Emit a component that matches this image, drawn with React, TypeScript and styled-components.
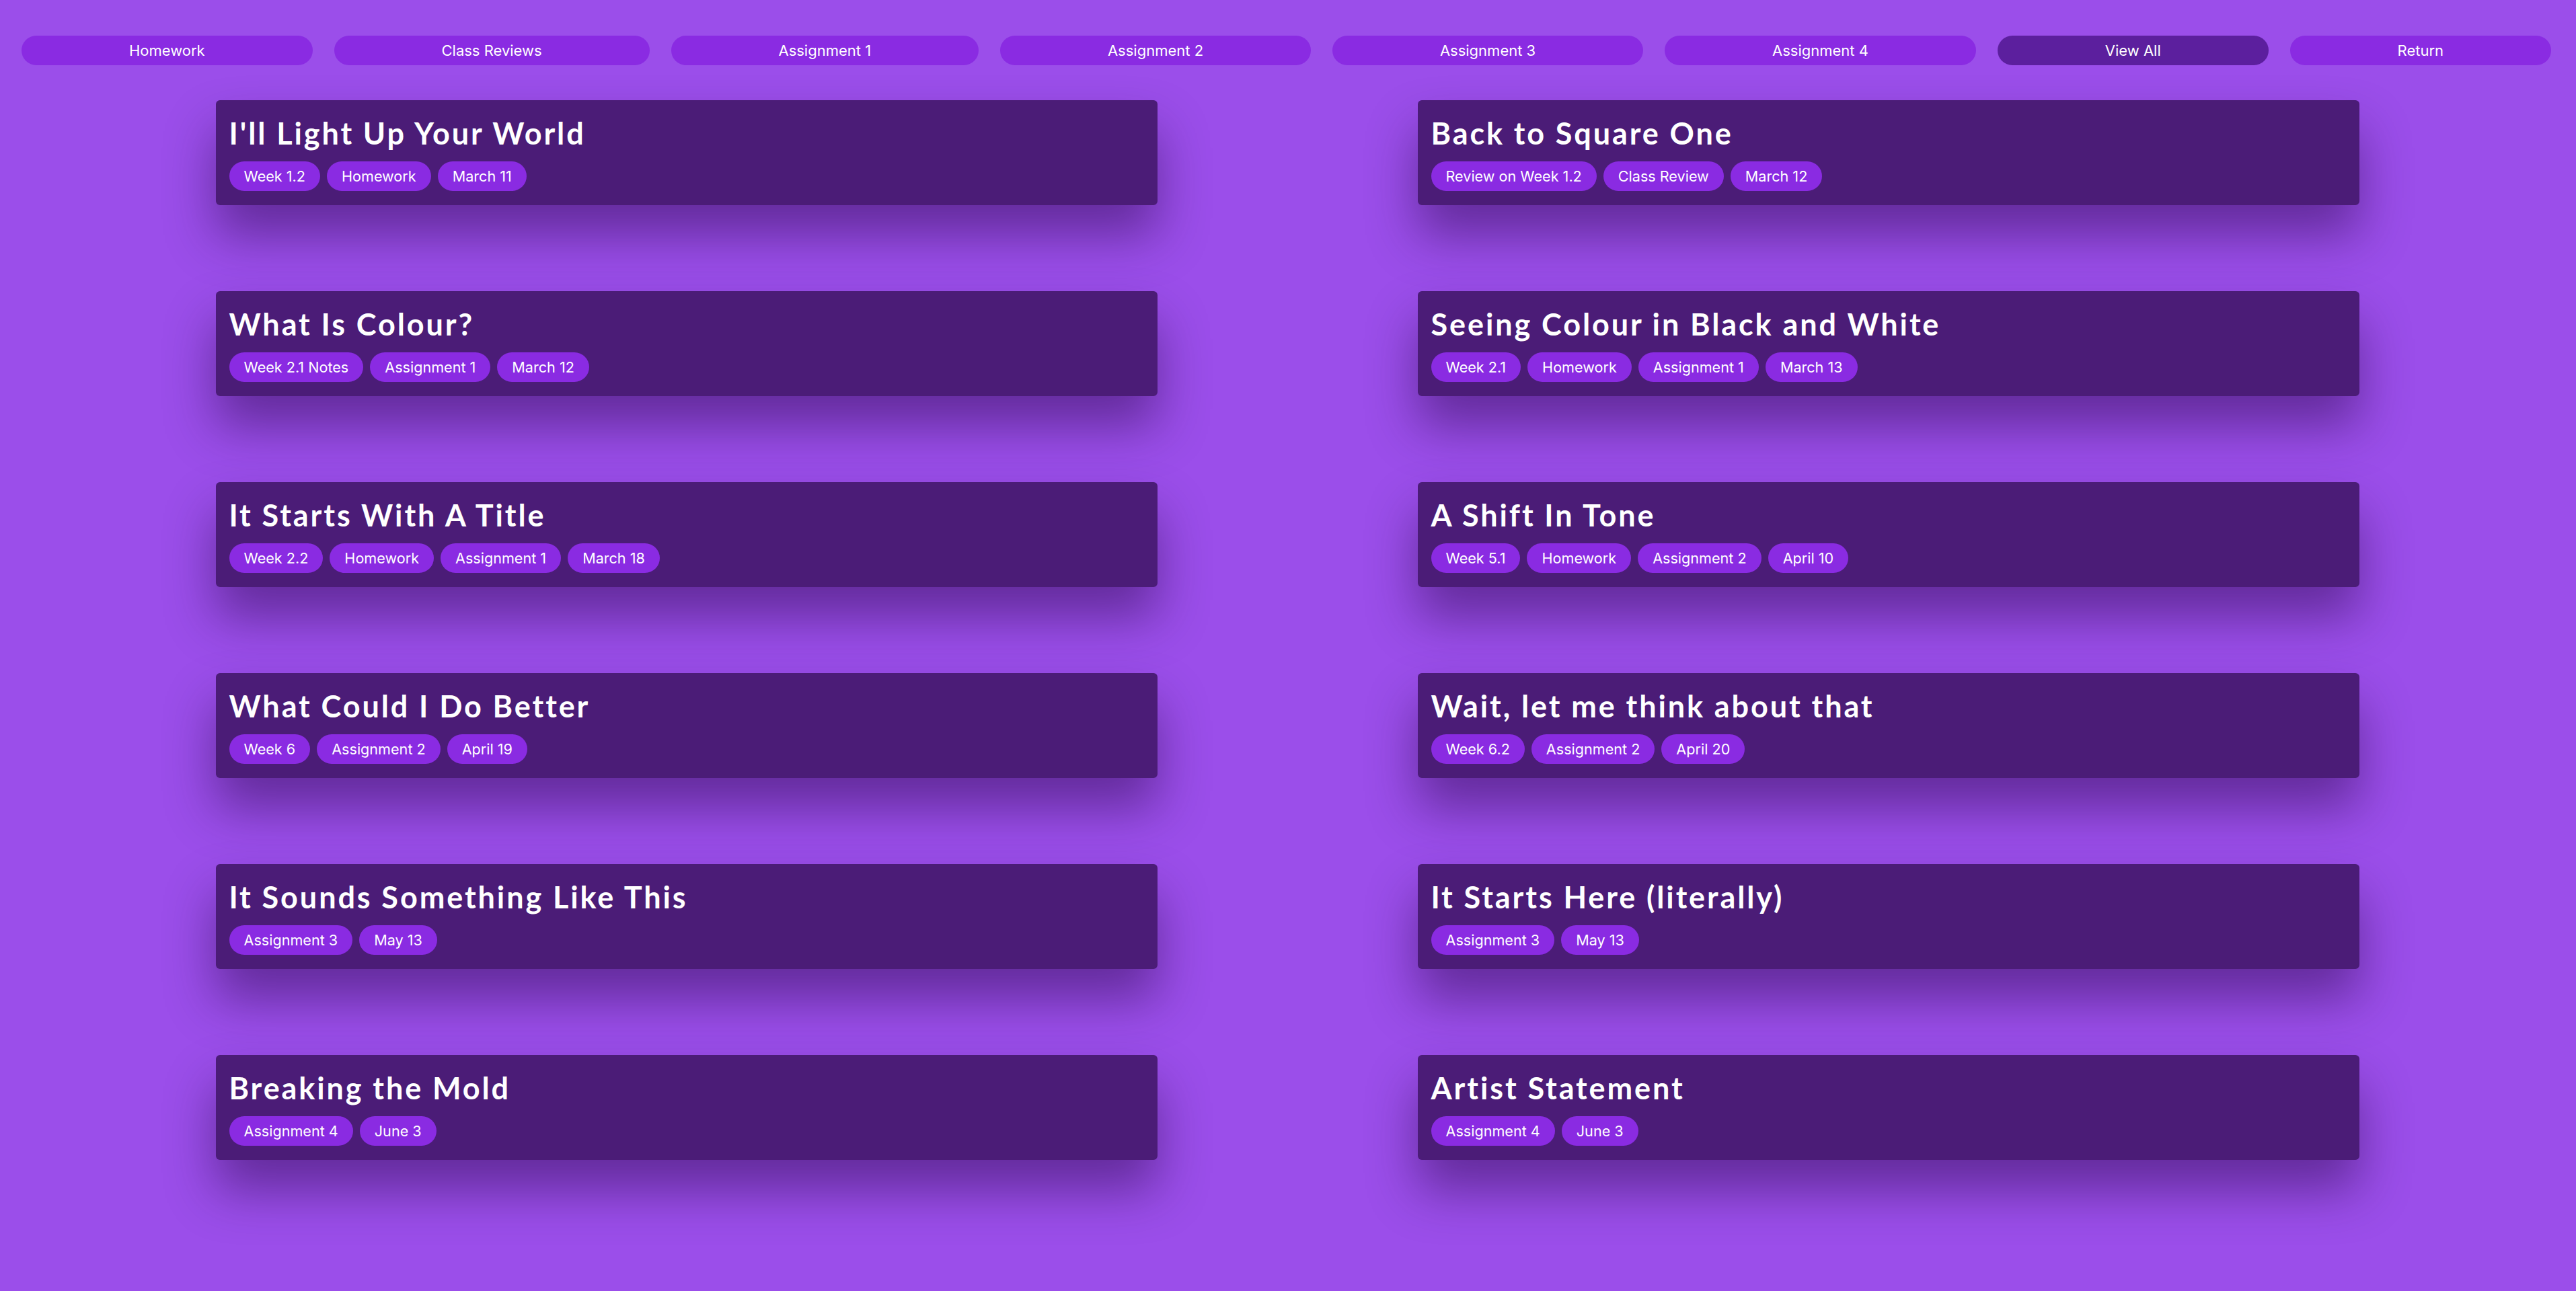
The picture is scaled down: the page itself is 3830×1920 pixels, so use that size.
import React from "react";
import styled, { createGlobalStyle } from "styled-components";

const bg = "#9b4eea";
const violet = "#8a2be2";
const deep = "#4b1c77";
const active = "#5c1f9e";

const GlobalStyle = createGlobalStyle`
  html, body {
    margin: 0;
    padding: 0;
    background: ${bg};
    min-height: 100%;
  }
  body {
    font-family: Inter, Roboto, "Liberation Sans", sans-serif;
    color: #ffffff;
  }
`;

const Page = styled.div`
  min-height: 1920px;
  background: ${bg};
  padding-top: 53px;
  box-sizing: border-box;
`;

const NavBar = styled.nav`
  display: flex;
  gap: 32px;
  padding: 0 37px 0 32px;
`;

const NavButton = styled.button<{ $active?: boolean }>`
  flex: 1 1 auto;
  height: 44px;
  border: none;
  border-radius: 22px;
  background: ${(p) => (p.$active ? active : violet)};
  color: #ffffff;
  font-family: Inter, Roboto, "Liberation Sans", sans-serif;
  font-size: 22px;
  font-weight: 400;
  padding: 0 24px;
  cursor: pointer;
`;

const Grid = styled.main`
  display: grid;
  grid-template-columns: 1fr 1fr;
  justify-items: center;
  row-gap: 128px;
  padding: 52px 129px 0 127px;
`;

const Card = styled.article`
  width: 1400px;
  box-sizing: border-box;
  height: 156px;
  padding: 22px 20px 20px;
  background: ${deep};
  border-radius: 6px;
  box-shadow: 0 45px 75px rgba(30, 0, 60, 0.45);
`;

const Title = styled.h2`
  margin: 0 0 14px 0;
  font-family: Lato, "Noto Sans", sans-serif;
  font-weight: 700;
  font-size: 45px;
  letter-spacing: 2.9px;
  line-height: 55px;
  color: #ffffff;
`;

const Tags = styled.div`
  display: flex;
  gap: 10px;
`;

const Tag = styled.span`
  display: inline-flex;
  align-items: center;
  height: 44px;
  padding: 0 22px;
  border-radius: 22px;
  background: ${violet};
  font-family: Inter, Roboto, "Liberation Sans", sans-serif;
  font-size: 21.6px;
  font-weight: 400;
  color: #ffffff;
`;

const navItems = [
  "Homework",
  "Class Reviews",
  "Assignment 1",
  "Assignment 2",
  "Assignment 3",
  "Assignment 4",
  "View All",
  "Return",
];

const posts: { title: string; tags: string[] }[] = [
  { title: "I'll Light Up Your World", tags: ["Week 1.2", "Homework", "March 11"] },
  { title: "Back to Square One", tags: ["Review on Week 1.2", "Class Review", "March 12"] },
  { title: "What Is Colour?", tags: ["Week 2.1 Notes", "Assignment 1", "March 12"] },
  {
    title: "Seeing Colour in Black and White",
    tags: ["Week 2.1", "Homework", "Assignment 1", "March 13"],
  },
  {
    title: "It Starts With A Title",
    tags: ["Week 2.2", "Homework", "Assignment 1", "March 18"],
  },
  { title: "A Shift In Tone", tags: ["Week 5.1", "Homework", "Assignment 2", "April 10"] },
  { title: "What Could I Do Better", tags: ["Week 6", "Assignment 2", "April 19"] },
  { title: "Wait, let me think about that", tags: ["Week 6.2", "Assignment 2", "April 20"] },
  { title: "It Sounds Something Like This", tags: ["Assignment 3", "May 13"] },
  { title: "It Starts Here (literally)", tags: ["Assignment 3", "May 13"] },
  { title: "Breaking the Mold", tags: ["Assignment 4", "June 3"] },
  { title: "Artist Statement", tags: ["Assignment 4", "June 3"] },
];

export default function App() {
  return (
    <Page>
      <GlobalStyle />
      <NavBar>
        {navItems.map((item) => (
          <NavButton key={item} $active={item === "View All"}>
            {item}
          </NavButton>
        ))}
      </NavBar>
      <Grid>
        {posts.map((post, index) => (
          <Card key={index}>
            <Title>{post.title}</Title>
            <Tags>
              {post.tags.map((tag) => (
                <Tag key={tag}>{tag}</Tag>
              ))}
            </Tags>
          </Card>
        ))}
      </Grid>
    </Page>
  );
}
